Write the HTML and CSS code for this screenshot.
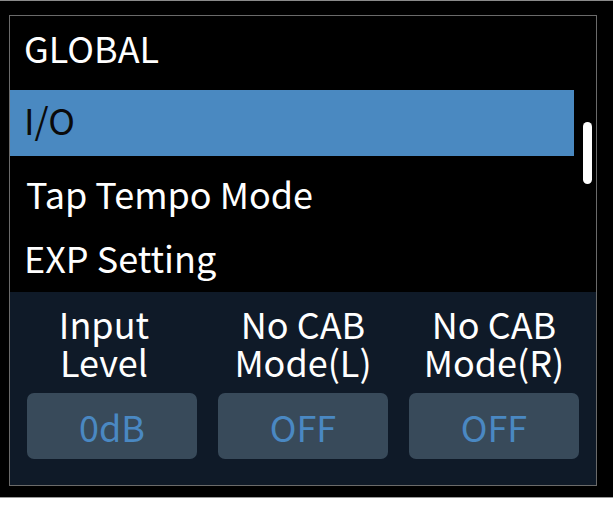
FILE: index.html
```html
<!DOCTYPE html>
<html>
<head>
<meta charset="utf-8">
<link rel="stylesheet" href="styles.css">
</head>
<body>
<div class="screen">
  <div class="frame">
    <div class="list">
      <div class="row row-global">GLOBAL</div>
      <div class="row row-io selected">I/O</div>
      <div class="row row-tap">Tap Tempo Mode</div>
      <div class="row row-exp">EXP Setting</div>
      <div class="thumb"></div>
    </div>
    <div class="panel">
      <div class="col">
        <div class="label label-input">Input<br>Level</div>
        <div class="btn">0dB</div>
      </div>
      <div class="col">
        <div class="label">No CAB<br>Mode(L)</div>
        <div class="btn">OFF</div>
      </div>
      <div class="col">
        <div class="label">No CAB<br>Mode(R)</div>
        <div class="btn">OFF</div>
      </div>
    </div>
  </div>
</div>
</body>
</html>
```
FILE: styles.css
```css
html, body {
  margin: 0;
  padding: 0;
  background: #ffffff;
}
body {
  font-family: "Noto Sans CJK JP", "Noto Sans", sans-serif;
  width: 613px;
  height: 513px;
  overflow: hidden;
}
.screen {
  background: #000;
  border-top: 1px solid #8a8a8a;
  border-bottom: 1px solid #9a9a9a;
  height: 498px;
  box-sizing: border-box;
  padding: 14px 16px 0 9px;
}
.frame {
  border: 1px solid #6a6a6a;
  height: 471px;
  box-sizing: border-box;
  display: flex;
  flex-direction: column;
}
.list {
  position: relative;
  height: 276px;
  background: #000;
  display: flex;
  flex-direction: column;
}
.row {
  color: #fff;
  font-size: 36px;
  display: flex;
  align-items: center;
  padding-left: 14px;
  line-height: 1;
  box-sizing: border-box;
}
.row-global { height: 74px; padding-bottom: 13px; }
.row-io { height: 66px; padding-bottom: 8px; }
.row-tap { height: 70px; padding-left: 16px; padding-top: 4px; }
.row-exp { height: 66px; padding-bottom: 4px; }
.selected {
  background: #4a89c1;
  color: #0a0a0a;
  width: 564px;
}
.thumb {
  position: absolute;
  left: 573px;
  top: 106px;
  width: 9px;
  height: 62px;
  border-radius: 5px;
  background: #fff;
}
.panel {
  flex: 1;
  background: #0f1a28;
  display: flex;
  gap: 21px;
  padding: 0 17px;
}
.col {
  width: 170px;
  display: flex;
  flex-direction: column;
  align-items: center;
}
.label {
  color: #fff;
  font-size: 36px;
  line-height: 38px;
  text-align: center;
  margin-top: 12px;
  height: 89px;
}
.label-input {
  margin-right: 16px;
}
.btn {
  width: 170px;
  height: 66px;
  border-radius: 7px;
  background: #384a5a;
  color: #4a88c2;
  font-size: 36px;
  display: flex;
  align-items: center;
  justify-content: center;
  line-height: 1;
}
```
